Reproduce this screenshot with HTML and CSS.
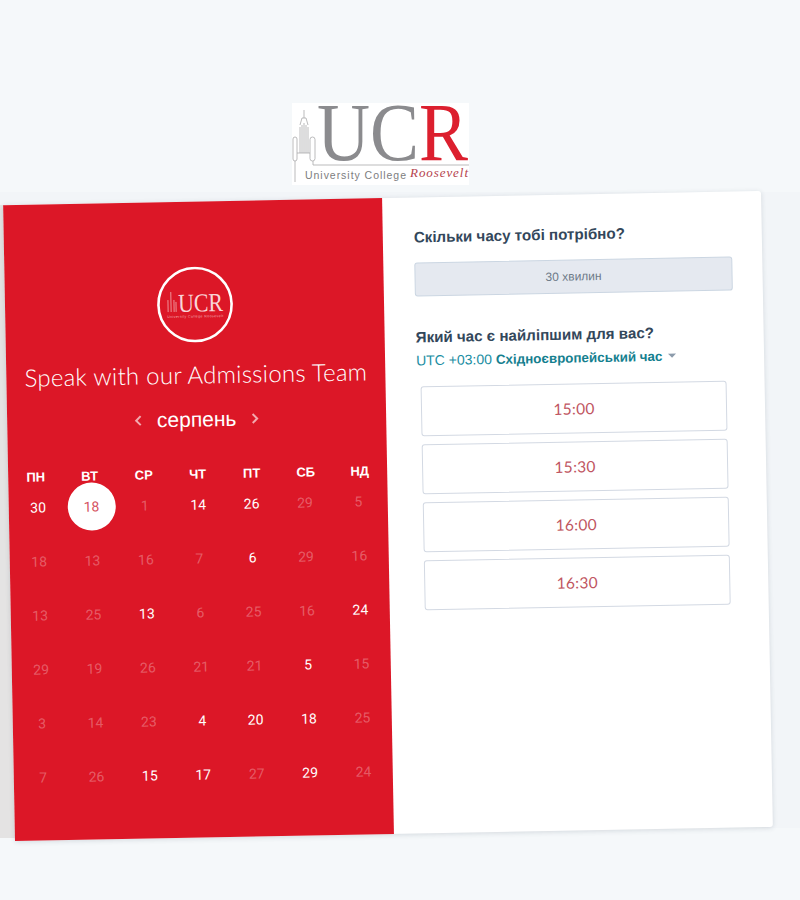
FILE: index.html
```html
<!DOCTYPE html>
<html lang="uk">
<head>
<meta charset="utf-8">
<title>Speak with our Admissions Team</title>
<link rel="stylesheet" href="styles.css">
</head>
<body>
<div class="backdrop"></div>
<header class="brand">
  <svg class="brand-logo" viewBox="0 0 177 82" width="177" height="82" aria-label="UCR University College Roosevelt">
    <rect width="177" height="82" fill="#fff"/>
    <g class="tower">
      <path d="M8 50V24M10 50V22M12 50V20M14 50V22M16 50V24"/>
      <path d="M12 7V15M8 22L10 15H14L16 22"/>
      <rect x="1" y="34" width="4" height="24" rx="2"/>
      <rect x="18" y="34" width="5" height="24" rx="2.5"/>
      <path d="M3 58V79M21 58V62H177M5 50H18"/>
    </g>
    <text class="logo-mark" x="25" y="57" font-size="83" textLength="151" lengthAdjust="spacingAndGlyphs">UC<tspan class="logo-red">R</tspan></text>
    <text class="logo-caption" x="13" y="76" textLength="101">University College</text>
    <text class="logo-name" x="118" y="74" textLength="58">Roosevelt</text>
  </svg>
</header>
<main class="card">
  <section class="panel-left">
    <div class="badge">
      <svg viewBox="0 0 76 76" width="76" height="76">
        <circle class="ring" cx="38" cy="38" r="36.6"/>
        <g class="mini-tower"><path d="M11 45V33M14 45V30M17 45V33M14 25V30M19 35V45"/></g>
        <text class="mini-logo" x="21" y="45" font-size="26" textLength="45" lengthAdjust="spacingAndGlyphs">UCR</text>
        <text class="mini-caption" x="10" y="51" textLength="56">University College Roosevelt</text>
      </svg>
    </div>
    <h1 class="title">Speak with our Admissions Team</h1>
    <div class="month">
      <svg class="chev" viewBox="0 0 8 12" width="8" height="12"><path d="M6.5 1.5L2 6l4.5 4.5"/></svg>
      <span class="month-name">серпень</span>
      <svg class="chev" viewBox="0 0 8 12" width="8" height="12"><path d="M1.5 1.5L6 6l-4.5 4.5"/></svg>
    </div>
    <div class="weekdays">
      <span>ПН</span><span>ВТ</span><span>СР</span><span>ЧТ</span><span>ПТ</span><span>СБ</span><span>НД</span>
    </div>
    <div class="days">
      <span class="on">30</span><span class="selected"><b>18</b></span><span>1</span><span class="on">14</span><span class="on">26</span><span>29</span><span>5</span>
      <span>18</span><span>13</span><span>16</span><span>7</span><span class="on">6</span><span>29</span><span>16</span>
      <span>13</span><span>25</span><span class="on">13</span><span>6</span><span>25</span><span>16</span><span class="on">24</span>
      <span>29</span><span>19</span><span>26</span><span>21</span><span>21</span><span class="on">5</span><span>15</span>
      <span>3</span><span>14</span><span>23</span><span class="on">4</span><span class="on">20</span><span class="on">18</span><span>25</span>
      <span>7</span><span>26</span><span class="on">15</span><span class="on">17</span><span>27</span><span class="on">29</span><span>24</span>
    </div>
  </section>
  <section class="panel-right">
    <h2 class="question">Скільки часу тобі потрібно?</h2>
    <div class="duration">30 хвилин</div>
    <h2 class="question second">Який час є найліпшим для вас?</h2>
    <div class="zone">UTC +03:00 <strong>Східноєвропейський час</strong><i class="caret"></i></div>
    <div class="slots">
      <button class="slot">15:00</button>
      <button class="slot">15:30</button>
      <button class="slot">16:00</button>
      <button class="slot">16:30</button>
    </div>
  </section>
</main>
</body>
</html>
```
FILE: styles.css
```css
html, body { margin: 0; height: 900px; overflow: hidden; }
body {
  position: relative;
  background: #f5f8fa;
  font-family: "Liberation Sans", Arial, sans-serif;
}
.backdrop {
  position: absolute;
  left: 0; right: 0; top: 192px;
  height: 636px;
  background: #f2f5f8;
}
.backdrop::before {
  content: "";
  position: absolute;
  left: 0; top: 13px;
  width: 30px; height: 633px;
  background: #e4e3e3;
}
.brand { display: flex; padding: 103px 0 0 292px; height: 82px; position: relative; }
.brand-logo { display: block; }
.tower { fill: none; stroke: #a9a9ab; stroke-width: .8; }
.logo-mark { font-family: "Liberation Serif", serif; fill: #8b8b8e; }
.logo-red { fill: #dc1f2e; }
.logo-caption { font-family: "Liberation Sans", sans-serif; font-size: 10.5px; fill: #7d7d80; }
.logo-name { font-family: "Liberation Serif", serif; font-size: 13px; font-style: italic; fill: #b5434e; }

.card {
  position: relative;
  display: flex;
  width: 758px;
  height: 636px;
  margin: 12.7px 0 0 8.5px;
  background: #fff;
  border-radius: 3px;
  box-shadow: 0 1px 5px rgba(45, 62, 80, .16);
  transform: rotate(-1.07deg);
}
.panel-left {
  width: 379px;
  flex: none;
  padding-top: 65px;
  box-sizing: border-box;
  background: #dc1727;
  color: #fff;
}
.badge { display: flex; justify-content: center; height: 76px; }
.ring { fill: none; stroke: #fff; stroke-width: 2.6; }
.mini-tower { fill: none; stroke: #f0a0a6; stroke-width: .9; }
.mini-logo { font-family: "Liberation Serif", serif; fill: #f9d5d8; }
.mini-caption { font-family: "Liberation Sans", sans-serif; font-size: 3.6px; fill: #f2a7ad; }
.title {
  margin: 16.7px 0 0;
  font-family: Lato, sans-serif;
  font-size: 24px;
  font-weight: 300;
  line-height: 30px;
  letter-spacing: .25px;
  text-align: center;
  white-space: nowrap;
}
.month {
  display: flex;
  justify-content: center;
  align-items: center;
  gap: 15px;
  height: 28px;
  margin-top: 16px;
}
.month-name { font-size: 21px; line-height: 28px; }
.chev { fill: none; stroke: #f2a9ae; stroke-width: 2; }
.weekdays, .days {
  display: grid;
  justify-content: center;
  text-align: center;
}
.weekdays {
  grid-template-columns: repeat(7, 54px);
  height: 14px;
  margin-top: 34px;
  font-size: 13px;
  font-weight: bold;
  line-height: 14px;
}
.days {
  grid-template-columns: repeat(7, 53.4px);
  grid-auto-rows: 54px;
  margin-top: -4px;
  font-family: Roboto, sans-serif;
  font-size: 14px;
  color: rgba(255, 255, 255, .3);
}
.days span { display: flex; align-items: center; justify-content: center; }
.days .on { color: #fff; }
.days .selected b {
  display: flex;
  flex: none;
  align-items: center;
  justify-content: center;
  width: 48px;
  height: 48px;
  border-radius: 50%;
  background: #fff;
  color: #d5525f;
  font-weight: 400;
}
.panel-right { flex: 1; padding: 30px 30px 0 31px; }
.question {
  margin: 0;
  font-size: 15.15px;
  font-weight: bold;
  line-height: 20px;
  color: #33475b;
}
.question.second { margin-top: 30.5px; }
.duration {
  box-sizing: border-box;
  height: 34px;
  margin-top: 15px;
  background: #e5e9f0;
  border: 1px solid #cbd6e2;
  border-radius: 3px;
  color: #6d7a88;
  font-size: 12px;
  line-height: 32px;
  text-align: center;
}
.zone {
  margin-top: 3.8px;
  font-size: 14px;
  line-height: 20px;
  color: #1b8ea3;
  white-space: nowrap;
}
.zone strong { color: #15808f; font-size: 13.4px; }
.caret {
  display: inline-block;
  margin-left: 6px;
  vertical-align: 3px;
  border: 4px solid transparent;
  border-top: 4px solid #8c9bab;
  border-bottom: 0;
}
.slots {
  display: flex;
  flex-direction: column;
  gap: 8px;
  width: 306px;
  margin: 15px 0 0 4px;
}
.slot {
  height: 50px;
  padding: 0;
  background: #fff;
  border: 1px solid #d3d9e3;
  border-radius: 3px;
  color: #c05561;
  font-family: Lato, sans-serif;
  font-size: 15.5px;
  letter-spacing: .3px;
}
```
